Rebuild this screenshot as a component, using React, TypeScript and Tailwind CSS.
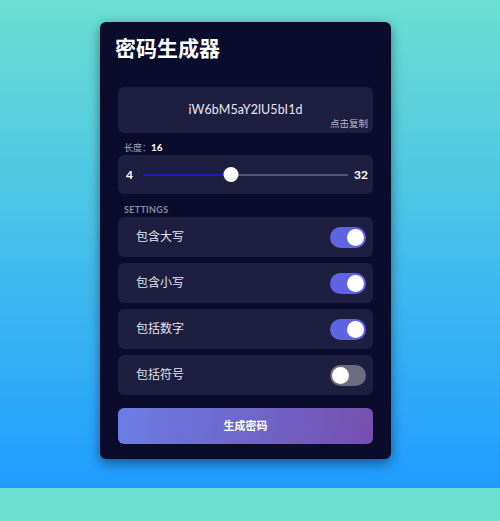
import { useState } from 'react';

const font = { fontFamily: 'Lato, "Noto Sans CJK SC", sans-serif' };

const Toggle = ({ on, onClick }: { on: boolean; onClick: () => void }) => (
  <button
    onClick={onClick}
    className={`flex items-center w-[36px] h-[21px] rounded-full px-[2px] ${on ? 'bg-[#5f64e3] justify-end' : 'bg-[#6c6c80] justify-start'}`}
  >
    <span className="block w-[17px] h-[17px] rounded-full bg-white" />
  </button>
);

export default function App() {
  const [length, setLength] = useState(16);
  const [opts, setOpts] = useState([
    { label: '包含大写', on: true },
    { label: '包含小写', on: true },
    { label: '包括数字', on: true },
    { label: '包括符号', on: false },
  ]);
  const pct = ((length - 4) / 28) * 100;

  return (
    <div className="min-h-[521px] bg-[#6be0cf]" style={font}>
      <div className="flex justify-center pt-[22px] pb-[29px] pr-[9px] bg-gradient-to-b from-[#6bdfd0] to-[#1f9bff]">
        <div className="w-[291px] bg-[#0b0c2b] rounded-[6px] shadow-[0_4px_12px_rgba(0,0,0,0.45)] px-[18px] pt-[11px] pb-[15px]">
          <h1 className="text-[21px] font-bold text-white leading-[30px] -ml-[3px]">密码生成器</h1>

          <div className="mt-[24px] h-[46px] rounded-[6px] bg-[#1e1f40] relative flex items-center justify-center">
            <span className="text-[12.5px] text-[#e6e6f2] tracking-[0.1px]">iW6bM5aY2lU5bI1d</span>
            <span className="absolute right-[5px] bottom-[2px] text-[9.5px] text-[#b6b6c8]">点击复制</span>
          </div>

          <div className="mt-[8px] ml-[6px] text-[9px] text-[#a6a6ba] leading-[13px]">
            长度：<span className="font-bold text-white text-[10px]">16</span>
          </div>

          <div className="mt-[1px] h-[39px] rounded-[6px] bg-[#1e1f40] flex items-center pl-[8px] pr-[5px]">
            <span className="text-[12px] font-bold text-white">4</span>
            <div className="flex-1 relative h-[15px] flex items-center ml-[10px] mr-[6px]">
              <div className="w-full h-[2px] bg-[#56567a]" />
              <div className="absolute left-0 h-[2px] bg-[#1d1db8]" style={{ width: `${pct}%` }} />
              <div
                className="absolute w-[15px] h-[15px] rounded-full bg-white -translate-x-1/2"
                style={{ left: `${pct}%` }}
              />
              <input
                type="range"
                min={4}
                max={32}
                value={length}
                onChange={e => setLength(Number(e.target.value))}
                className="absolute inset-0 w-full opacity-0 cursor-pointer"
              />
            </div>
            <span className="text-[12px] font-bold text-white">32</span>
          </div>

          <div className="mt-[10px] ml-[6px] text-[9px] font-bold text-[#8a8aa2] tracking-[0.3px] leading-[12px]">SETTINGS</div>

          <div className="mt-[1px] flex flex-col gap-[6px]">
            {opts.map((o, i) => (
              <div key={o.label} className="h-[40px] rounded-[6px] bg-[#1e1f40] flex items-center justify-between pl-[18px] pr-[7px]">
                <span className="text-[12px] text-[#e4e4ee]">{o.label}</span>
                <Toggle on={o.on} onClick={() => setOpts(opts.map((x, j) => (j === i ? { ...x, on: !x.on } : x)))} />
              </div>
            ))}
          </div>

          <button
            className="mt-[13px] w-full h-[36px] rounded-[6px] text-[11px] font-bold text-white"
            style={{ background: 'linear-gradient(100deg, #6a7ee6 0%, #764fae 100%)' }}
          >
            生成密码
          </button>
        </div>
      </div>
    </div>
  );
}
